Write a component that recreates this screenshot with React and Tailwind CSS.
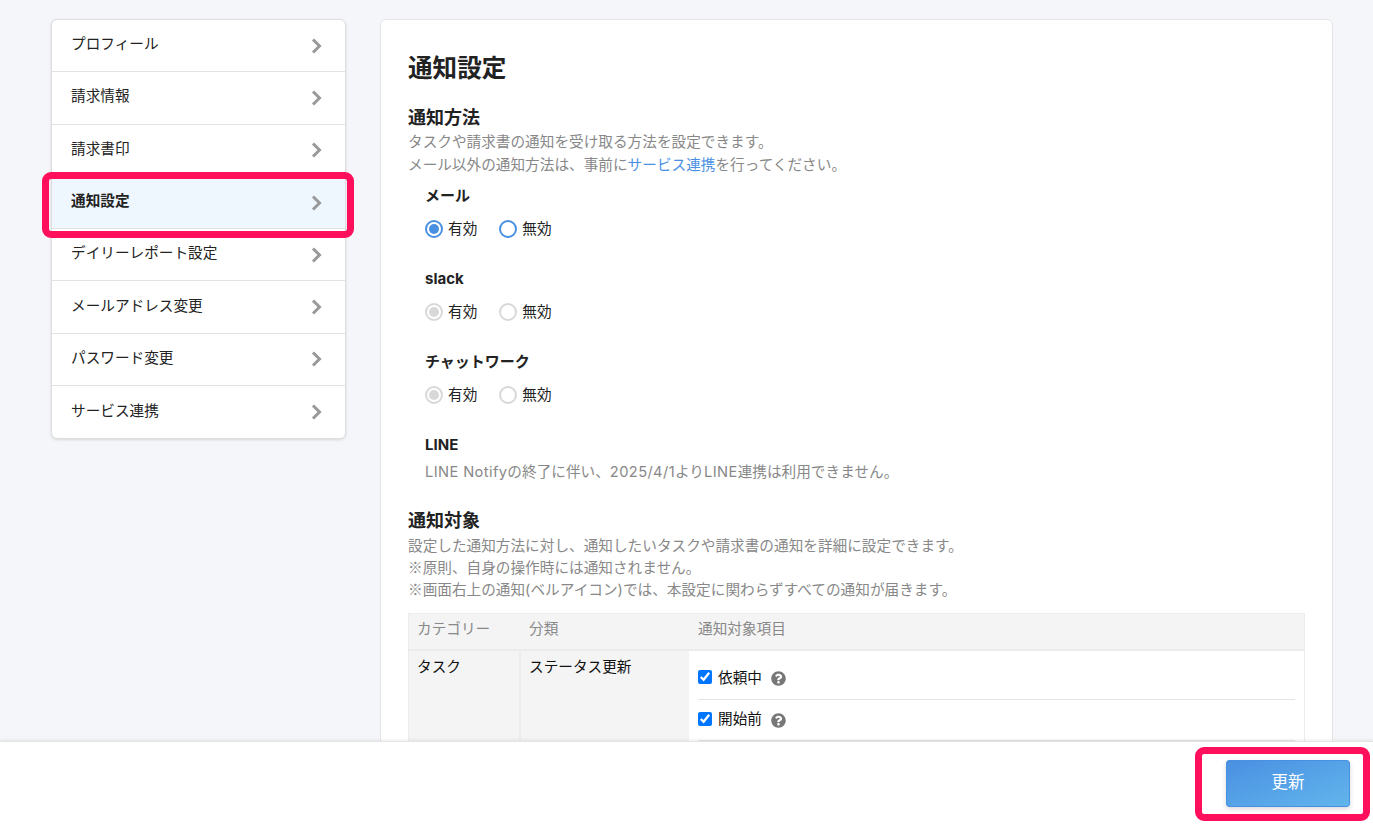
import React from "react";
import { FaQuestionCircle } from "react-icons/fa";

const menu = ["プロフィール", "請求情報", "請求書印", "通知設定", "デイリーレポート設定", "メールアドレス変更", "パスワード変更", "サービス連携"];

function Chevron() {
  return (
    <svg width="14" height="16" viewBox="0 0 14 16" fill="none" className="shrink-0">
      <path d="M3 1.5L9.5 8L3 14.5" stroke="#999" strokeWidth="3" strokeLinejoin="miter" />
    </svg>
  );
}

function Radio({ label, checked, disabled }) {
  const ring = disabled ? "border-[#d8d8d8]" : "border-[#4a90e2]";
  const dot = disabled ? "bg-[#d8d8d8]" : "bg-[#4a90e2]";
  return (
    <label className="flex items-center gap-[5px] text-[14.65px] leading-[22px] text-[#222]">
      <span className={`flex h-[18px] w-[18px] items-center justify-center rounded-full border-2 bg-white ${ring}`}>
        {checked && <span className={`h-[10px] w-[10px] rounded-full ${dot}`} />}
      </span>
      {label}
    </label>
  );
}

function Method({ title, disabled, checked = true, className = "" }) {
  return (
    <div className={className}>
      <div className="text-[15px] font-bold leading-[22px] text-[#222]">{title}</div>
      <div className="mt-[11px] flex gap-[22px]">
        <Radio label="有効" checked={checked} disabled={disabled} />
        <Radio label="無効" disabled={disabled} />
      </div>
    </div>
  );
}

function Target({ label, className = "h-[41px]" }) {
  return (
    <div className={`flex items-center border-b border-[#e4e4e4] ${className}`}>
      <input type="checkbox" defaultChecked className="m-0 -mt-[3px] h-[14px] w-[14px] accent-[#0075ff]" />
      <span className="ml-[6px] text-[14.65px] text-[#111]">{label}</span>
      <FaQuestionCircle className="ml-[9px] text-[15px] text-[#777]" />
    </div>
  );
}

function Mark() {
  return <span className="font-['Noto_Sans_CJK_JP',sans-serif] leading-[0]">※</span>;
}

export default function App() {
  return (
    <div className="relative flex h-[824px] w-full flex-col overflow-hidden bg-[#f5f6fa] font-['Inter','Noto_Sans_CJK_JP',sans-serif]">
      <main className="flex min-h-0 flex-1 items-start gap-[34px] overflow-hidden pl-[51px] pr-[39px] pt-[19px]">
        <nav className="w-[295px] shrink-0 overflow-hidden rounded-md border border-[#dedede] bg-white shadow-[0_1px_3px_rgba(0,0,0,0.12)]">
          {menu.map((m, i) => (
            <div
              key={m}
              className={`flex h-[52.3px] items-center justify-between pl-[19px] pr-[21px] text-[14.65px] text-[#222] ${i < menu.length - 1 ? "border-b border-[#e2e2e2]" : ""} ${m === "通知設定" ? "bg-[#eef6fe] font-bold" : ""}`}
            >
              <span className="-mt-[1px]">{m}</span>
              <Chevron />
            </div>
          ))}
        </nav>

        <section className="min-h-[900px] w-[953px] shrink-0 rounded-md border border-[#e4e4e4] bg-white pl-[27px] pr-[27px] pt-[31px]">
          <h1 className="text-[24.6px] font-bold leading-[34px] text-[#222]">通知設定</h1>
          <h2 className="mt-[21px] text-[18px] font-bold leading-[24px] text-[#222]">通知方法</h2>
          <p className="mt-[1px] text-[14.65px] leading-[22.5px] text-[#888]">
            タスクや請求書の通知を受け取る方法を設定できます。<br />
            メール以外の通知方法は、事前に<span className="text-[#4a90e2]">サービス連携</span>を行ってください。
          </p>
          <div className="pl-[17px]">
            <Method title="メール" className="mt-[9px]" />
            <Method title="slack" disabled className="mt-[28px]" />
            <Method title="チャットワーク" disabled className="mt-[28px]" />
            <div className="mt-[28px] text-[15px] font-bold leading-[22px] text-[#222]">LINE</div>
            <p className="mt-[5px] text-[14.65px] leading-[22px] text-[#888]">
              <span className="tracking-[0.4px]">LINE Notify</span>の終了に伴い、<span className="tracking-[0.4px]">2025/4/1</span>より<span className="tracking-[0.4px]">LINE</span>連携は利用できません。
            </p>
          </div>
          <h2 className="mt-[26px] text-[18px] font-bold leading-[24px] text-[#222]">通知対象</h2>
          <p className="mt-[2px] text-[14.65px] leading-[22px] text-[#888]">
            設定した通知方法に対し、通知したいタスクや請求書の通知を詳細に設定できます。<br />
            <Mark />原則、自身の操作時には通知されません。<br />
            <Mark />画面右上の通知(ベルアイコン)では、本設定に関わらずすべての通知が届きます。
          </p>
          <div className="mt-[12px] border border-[#ececec]">
            <div className="grid h-[35px] grid-cols-[110px_170px_1fr] items-center bg-[#f4f4f4] pb-[3px] text-[14.65px] text-[#888]">
              <div className="pl-[8px]">カテゴリー</div>
              <div className="pl-[10px]">分類</div>
              <div className="pl-[9px]">通知対象項目</div>
            </div>
            <div className="grid grid-cols-[110px_170px_1fr] border-t-2 border-[#ececec] text-[14.65px] text-[#111]">
              <div className="bg-[#f4f4f4] pl-[8px] pt-[6px]">タスク</div>
              <div className="border-l-2 border-[#ececec] bg-[#f4f4f4] pl-[8px] pt-[6px]">ステータス更新</div>
              <div className="px-[9px] pt-[7px]">
                <Target label="依頼中" className="h-[42px]" />
                <Target label="開始前" />
              </div>
            </div>
          </div>
        </section>
      </main>

      <footer className="relative z-10 flex h-[83px] shrink-0 items-start justify-end border-t border-[#e4e4e4] bg-white pr-[23px] pt-[18px] shadow-[0_-1px_3px_rgba(0,0,0,0.08)]">
        <button className="h-[47px] w-[124px] rounded-[3px] border border-[#4a90e2] bg-gradient-to-br from-[#4a90e2] to-[#62b5ec] pb-[2px] text-[16.5px] text-white shadow-[0_2px_5px_rgba(0,0,0,0.15)]">
          更新
        </button>
      </footer>

      <div className="pointer-events-none absolute left-[42px] top-[172px] z-20 h-[66px] w-[312px] rounded-[9px] border-[7px] border-[#ff0f5c]" />
      <div className="pointer-events-none absolute left-[1195px] top-[747px] z-20 h-[74px] w-[175px] rounded-[9px] border-[7px] border-[#ff0f5c]" />
    </div>
  );
}
